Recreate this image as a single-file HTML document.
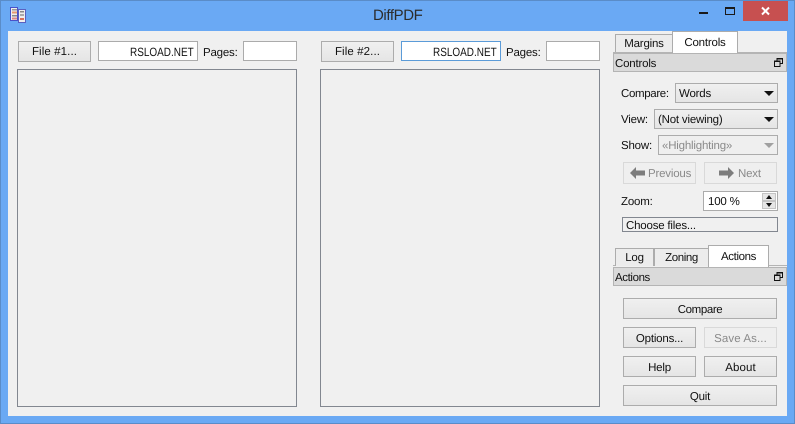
<!DOCTYPE html>
<html><head><meta charset="utf-8"><style>
html,body{margin:0;padding:0}
body{width:795px;height:424px;overflow:hidden;position:relative;background:#6aa9f4;font:11.5px "Liberation Sans",sans-serif;color:#111;text-rendering:geometricPrecision;letter-spacing:-.2px}
div,svg{position:absolute;box-sizing:border-box}
.t{white-space:nowrap;line-height:16px}
.b{border:1px solid #acacac;background:linear-gradient(#f0f0f0,#e5e5e5);text-align:center;white-space:nowrap}
.d{border-color:#d9d9d9;background:#efefef;color:#8a8a8a}
.e{border:1px solid #ababab;background:#fff;text-align:right;padding-right:3px;line-height:21px;white-space:nowrap}
.n{display:inline-block;font-size:12px;letter-spacing:0;transform:scaleX(.83);transform-origin:right center}
.f{border:1px solid #828790;background:#f0f0f0}
.tab{border:1px solid #acacac;border-bottom:0;background:#ececec;text-align:center}
.on{background:#fff}
.dock{background:#dadada;border:1px solid #b4b4b4;line-height:21px;padding-left:1px}
.c{border:1px solid #acacac;background:linear-gradient(#f0f0f0,#e5e5e5);line-height:21px;padding-left:3px;white-space:nowrap}
.arr{width:0;height:0;border-left:5px solid transparent;border-right:5px solid transparent;border-top:5px solid #111}
</style></head><body>
<div style="left:0;top:0;width:795px;height:424px;border:1px solid #5a8cc8"></div>
<svg style="left:9px;top:6px" width="18" height="18" viewBox="0 0 18 18">
<rect x="1.5" y="1.5" width="7" height="13" fill="#eee" stroke="#4a52c8"/><rect x="3" y="3" width="5" height="1.5" fill="#999"/><rect x="3" y="5.5" width="5" height="2" fill="#e69a70"/><rect x="3" y="9" width="5" height="1.5" fill="#888"/><rect x="3" y="11.5" width="5" height="2" fill="#d88"/>
<rect x="9.5" y="3.5" width="7" height="13" fill="#eee" stroke="#5a60c0"/><rect x="11" y="5" width="4" height="1.5" fill="#888"/><rect x="11" y="8" width="4" height="2" fill="#aaa"/><rect x="11" y="12" width="4" height="2" fill="#d8705a"/>
</svg>
<div class="t" style="left:373px;top:7px;font-size:15px;line-height:17px;color:#2b2b2b;letter-spacing:-.4px">DiffPDF</div>
<div style="left:699px;top:12px;width:9px;height:2px;background:#1a1a1a"></div>
<div style="left:725px;top:7px;width:10px;height:8px;border:1px solid #1a1a1a;border-top-width:2px"></div>
<div style="left:743px;top:1px;width:45px;height:20px;background:#c75050"></div>
<svg style="left:760px;top:6px" width="11" height="10"><path d="M2 1.5L9 8.5M9 1.5L2 8.5" stroke="#fff" stroke-width="2"/></svg>
<div style="left:8px;top:31px;width:779px;height:385px;background:#f0f0f0"></div>

<div class="b" style="left:18px;top:41px;width:73px;height:21px;line-height:21px;letter-spacing:.1px">File #1...</div>
<div class="e" style="left:98px;top:41px;width:100px;height:20px"><span class="n">RSLOAD.NET</span></div>
<div class="t" style="left:203px;top:45px">Pages:</div>
<div class="e" style="left:243px;top:41px;width:54px;height:20px"></div>
<div class="f" style="left:17px;top:69px;width:280px;height:338px"></div>

<div class="b" style="left:321px;top:41px;width:73px;height:21px;line-height:21px;letter-spacing:.1px">File #2...</div>
<div class="e" style="left:401px;top:41px;width:100px;height:20px;border-color:#5b9bd8"><span class="n">RSLOAD.NET</span></div>
<div class="t" style="left:506px;top:45px">Pages:</div>
<div class="e" style="left:546px;top:41px;width:54px;height:20px"></div>
<div class="f" style="left:320px;top:69px;width:280px;height:338px"></div>

<div style="left:613px;top:52px;width:174px;height:1px;background:#b4b4b4"></div>
<div class="tab" style="left:615px;top:34px;width:58px;height:18px;line-height:18px">Margins</div>
<div class="tab on" style="left:672px;top:31px;width:66px;height:22px;line-height:22px">Controls</div>
<div class="dock" style="left:613px;top:53px;width:174px;height:19px">Controls</div>
<svg style="left:774px;top:58px" width="9" height="9"><path d="M3 2.5V.5H8.5V5.5H6.5M.5 3H6V8.5H.5Z" fill="none" stroke="#111"/><path d="M3 1h5M1 3.5h5" stroke="#111"/></svg>

<div class="t" style="left:621px;top:86px;letter-spacing:-.35px">Compare:</div>
<div class="c" style="left:675px;top:83px;width:103px;height:20px">Words</div>
<div class="arr" style="left:764px;top:91px"></div>
<div class="t" style="left:621px;top:112px">View:</div>
<div class="c" style="left:654px;top:109px;width:124px;height:20px">(Not viewing)</div>
<div class="arr" style="left:764px;top:117px"></div>
<div class="t" style="left:621px;top:138px">Show:</div>
<div class="c d" style="left:658px;top:135px;width:120px;height:20px;background:#efefef">«Highlighting»</div>
<div class="arr" style="left:764px;top:143px;border-top-color:#a0a0a0"></div>

<div class="b d" style="left:623px;top:162px;width:73px;height:22px;line-height:23px;text-align:left;padding-left:24px">Previous</div>
<svg style="left:629px;top:166px" width="18" height="14"><path d="M1 7L7 1V4.5H16V9.5H7V13Z" fill="#7d7d7d"/></svg>
<div class="b d" style="left:704px;top:162px;width:73px;height:22px;line-height:23px;text-align:left;padding-left:33px">Next</div>
<svg style="left:717px;top:166px" width="18" height="14"><path d="M17 7L11 1V4.5H2V9.5H11V13Z" fill="#7d7d7d"/></svg>

<div class="t" style="left:621px;top:194px">Zoom:</div>
<div class="e" style="left:703px;top:191px;width:75px;height:20px;text-align:left;padding-left:4px">100 %</div>
<div style="left:762px;top:193px;width:14px;height:8px;background:#e6e6e6;border:1px solid #c4c4c4"></div>
<div style="left:762px;top:201px;width:14px;height:8px;background:#e6e6e6;border:1px solid #c4c4c4"></div>
<div style="left:766px;top:195px;border-left:3px solid transparent;border-right:3px solid transparent;border-bottom:4px solid #111"></div>
<div style="left:766px;top:203px;border-left:3px solid transparent;border-right:3px solid transparent;border-top:4px solid #111"></div>
<div style="left:622px;top:217px;width:156px;height:15px;border:1px solid #828790;line-height:16px;padding-left:3px;background:#f0f0f0">Choose files...</div>

<div style="left:613px;top:265px;width:174px;height:1px;background:#b4b4b4"></div>
<div class="tab" style="left:615px;top:248px;width:39px;height:18px;line-height:18px">Log</div>
<div class="tab" style="left:654px;top:248px;width:55px;height:18px;line-height:18px;letter-spacing:-.4px">Zoning</div>
<div class="tab on" style="left:708px;top:245px;width:61px;height:22px;line-height:22px;letter-spacing:-.4px">Actions</div>
<div class="dock" style="left:613px;top:267px;width:174px;height:19px;letter-spacing:-.4px">Actions</div>
<svg style="left:774px;top:272px" width="9" height="9"><path d="M3 2.5V.5H8.5V5.5H6.5M.5 3H6V8.5H.5Z" fill="none" stroke="#111"/><path d="M3 1h5M1 3.5h5" stroke="#111"/></svg>

<div class="b" style="left:623px;top:298px;width:154px;height:21px;line-height:23px;letter-spacing:-.4px">Compare</div>
<div class="b" style="left:623px;top:327px;width:73px;height:21px;line-height:23px">Options...</div>
<div class="b d" style="left:704px;top:327px;width:73px;height:21px;line-height:23px;letter-spacing:.1px">Save As...</div>
<div class="b" style="left:623px;top:356px;width:73px;height:21px;line-height:23px">Help</div>
<div class="b" style="left:704px;top:356px;width:73px;height:21px;line-height:23px;letter-spacing:.1px">About</div>
<div class="b" style="left:623px;top:385px;width:154px;height:21px;line-height:23px">Quit</div>
</body></html>
